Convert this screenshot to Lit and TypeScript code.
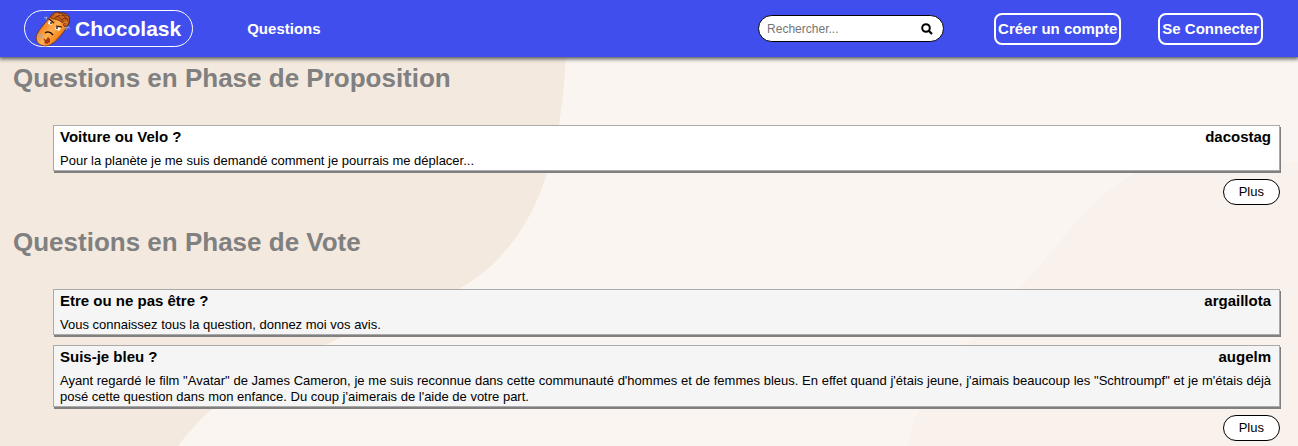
import { LitElement, html, css } from "lit";
import { customElement, property } from "lit/decorators.js";

interface Question {
  title: string;
  author: string;
  text: string;
}

const proposals: Question[] = [
  {
    title: "Voiture ou Velo ?",
    author: "dacostag",
    text: "Pour la planète je me suis demandé comment je pourrais me déplacer...",
  },
];

const votes: Question[] = [
  {
    title: "Etre ou ne pas être ?",
    author: "argaillota",
    text: "Vous connaissez tous la question, donnez moi vos avis.",
  },
  {
    title: "Suis-je bleu ?",
    author: "augelm",
    text: "Ayant regardé le film \"Avatar\" de James Cameron, je me suis reconnue dans cette communauté d'hommes et de femmes bleus. En effet quand j'étais jeune, j'aimais beaucoup les \"Schtroumpf\" et je m'étais déjà posé cette question dans mon enfance. Du coup j'aimerais de l'aide de votre part.",
  },
];

@customElement("app-logo")
export class AppLogo extends LitElement {
  static styles = css`
    :host { display: block; width: 38px; height: 36px; }
    svg { display: block; width: 100%; height: 100%; }
  `;

  render() {
    return html`
      <svg viewBox="0 1 38 36" aria-hidden="true">
        <defs>
          <linearGradient id="skin" x1="0.15" y1="0.25" x2="0.8" y2="0.8">
            <stop offset="0" stop-color="#c9590f" />
            <stop offset="0.2" stop-color="#f58a22" />
            <stop offset="0.5" stop-color="#ffb055" />
            <stop offset="0.8" stop-color="#f88a1c" />
            <stop offset="1" stop-color="#b94f0c" />
          </linearGradient>
        </defs>
        <path d="M17 6C12 12 6 18 3 24C0 31 5 36 12 36C19 35 24 29 28 24C33 18 36 12 33 7C29 2 21 2 17 6Z" fill="url(#skin)" stroke="#5a2a20" stroke-width="0.7" />
        <path d="M17 6C19 2 24 1 27 3C33 2 37 7 35 12C35 15 32 18 30 16C29 12 25 10 21 9C18 9 16 8 17 6Z" fill="#c8611a" stroke="#4a1c0c" stroke-width="0.8" />
        <path d="M19 5Q26 6 31 14M24 3Q30 4 34 11M21 8Q27 3 33 6M27 10Q30 7 34 9" fill="none" stroke="#5a240e" stroke-width="0.7" />
        <path d="M20 6Q24 3 28 5M28 14Q31 11 34 13" fill="none" stroke="#f09040" stroke-width="0.8" />
        <path d="M15 10L18 12L18 15L14 14ZM22 17L27 18L25 21L21 19Z" fill="#fff" />
        <path d="M15 9L20 13M22 16L28 17" stroke="#251316" stroke-width="1.2" />
        <path d="M17 12V14M23 17V19" stroke="#111" stroke-width="1.3" />
        <path d="M11 23Q15 20 19 25" fill="none" stroke="#180b09" stroke-width="1.4" />
        <path d="M9 28L12 30L14 27L16 29L16 32L13 34L10 33L11 32Z" fill="#a8380c" />
        <path d="M10 8L13 7L12 10M30 18L34 17L32 20M34 16L36 19M4 25L8 24L6 28M7 29L9 26" fill="none" stroke="#a4aaca" stroke-width="0.9" />
      </svg>
    `;
  }
}

@customElement("question-card")
export class QuestionCard extends LitElement {
  @property({ attribute: false }) question!: Question;
  @property({ type: Boolean, reflect: true }) shaded = false;

  static styles = css`
    :host {
      display: block;
      padding: 3px 8px 1px 6px;
      background: #fff;
      border: 1px solid #aaa;
      box-shadow: 1px 2px 0 #808080;
    }
    :host([shaded]) { background: #f5f5f5; }
    .head {
      display: flex;
      justify-content: space-between;
      gap: 16px;
      font-size: 15px;
      line-height: 16px;
      font-weight: bold;
    }
    .title { margin: 0; font-size: inherit; }
    .text {
      margin: 8px 0 0;
      font-size: 13px;
      line-height: 16px;
      text-align: justify;
    }
  `;

  render() {
    return html`
      <div class="head">
        <h2 class="title">${this.question.title}</h2>
        <span>${this.question.author}</span>
      </div>
      <p class="text">${this.question.text}</p>
    `;
  }
}

@customElement("app-root")
export class AppRoot extends LitElement {
  static styles = css`
    :host {
      display: block;
      min-height: 100vh;
      box-sizing: border-box;
      font-family: "Liberation Sans", Arial, sans-serif;
      color: #000;
      background: #faf5f0
        url("data:image/svg+xml,%3Csvg xmlns='http://www.w3.org/2000/svg' viewBox='0 0 1298 446'%3E%3Cpath fill='%23f4e9df' d='M0 0H566Q568 70 559 125C552 162 541 198 524 225C507 253 486 274 457 290C425 308 380 320 340 338Q255 378 213 408Q192 427 178 446H0Z'/%3E%3Cpath fill='%23f9f1eb' d='M1298 162C1230 156 1180 150 1135 172C1090 200 1062 240 1030 277C1010 300 985 320 965 345C933 380 912 415 908 446H1298Z'/%3E%3C/svg%3E")
        top left / cover no-repeat;
    }
    .bar {
      display: flex;
      align-items: center;
      height: 57px;
      padding: 0 35px 0 24px;
      box-sizing: border-box;
      background: #404eed;
      box-shadow: 0 1px 4px 1px #555;
      color: #fff;
      font-weight: bold;
      font-size: 15px;
      line-height: 18px;
    }
    .bar a { color: inherit; text-decoration: none; }
    .brand {
      display: flex;
      align-items: center;
      gap: 3px;
      height: 35px;
      padding: 0 11px 0 9px;
      border: 1px solid #fff;
      border-radius: 19px;
      font-size: 21px;
      line-height: 26px;
    }
    .nav { margin-left: 54px; }
    .search {
      display: flex;
      align-items: center;
      width: 186px;
      height: 27px;
      margin-left: auto;
      padding: 0 10px 0 8px;
      box-sizing: border-box;
      background: #fff;
      border: 1px solid #000;
      border-radius: 14px;
    }
    .field {
      flex: 1;
      min-width: 0;
      padding: 0;
      border: 0;
      outline: 0;
      background: none;
      font: 12px/16px "Liberation Sans", Arial, sans-serif;
    }
    .field::placeholder { color: #757575; }
    .go { display: flex; padding: 0; border: 0; background: none; }
    .go svg { width: 12px; height: 12px; }
    .account { display: flex; gap: 37px; margin-left: 50px; }
    .action {
      padding: 5px 2px;
      border: 2px solid #fff;
      border-radius: 8px;
    }
    .page { padding: 6px 18px 4px 13px; }
    .phase + .phase { margin-top: 22px; }
    .heading {
      margin: 0;
      font-size: 26px;
      line-height: 30px;
      color: #808080;
    }
    .list {
      display: grid;
      gap: 10px;
      margin: 32px 0 8px 40px;
    }
    .more { display: flex; justify-content: flex-end; }
    .plus {
      padding: 4px 15px;
      border: 1px solid #000;
      border-radius: 13px;
      background: #fff;
      color: #000;
      font: 13px/16px "Liberation Sans", Arial, sans-serif;
    }
  `;

  private phase(name: string, questions: Question[], shaded: boolean) {
    return html`
      <section class="phase">
        <h1 class="heading">${name}</h1>
        <div class="list">
          ${questions.map((q) => html`<question-card .question=${q} ?shaded=${shaded}></question-card>`)}
        </div>
        <div class="more"><button class="plus" type="button">Plus</button></div>
      </section>
    `;
  }

  render() {
    return html`
      <header class="bar">
        <a class="brand" href="#"><app-logo></app-logo><span>Chocolask</span></a>
        <nav class="nav"><a href="#questions">Questions</a></nav>
        <form class="search" role="search">
          <input class="field" type="text" placeholder="Rechercher..." aria-label="Rechercher" />
          <button class="go" type="button" aria-label="Lancer la recherche">
            <svg viewBox="0 0 12 12" aria-hidden="true">
              <circle cx="5" cy="5" r="3.8" fill="none" stroke="#000" stroke-width="2" />
              <path d="M8 8L11 11" stroke="#000" stroke-width="2.2" />
            </svg>
          </button>
        </form>
        <div class="account">
          <a class="action" href="#inscription">Créer un compte</a>
          <a class="action" href="#connexion">Se Connecter</a>
        </div>
      </header>
      <main class="page">
        ${this.phase("Questions en Phase de Proposition", proposals, false)}
        ${this.phase("Questions en Phase de Vote", votes, true)}
      </main>
    `;
  }
}
